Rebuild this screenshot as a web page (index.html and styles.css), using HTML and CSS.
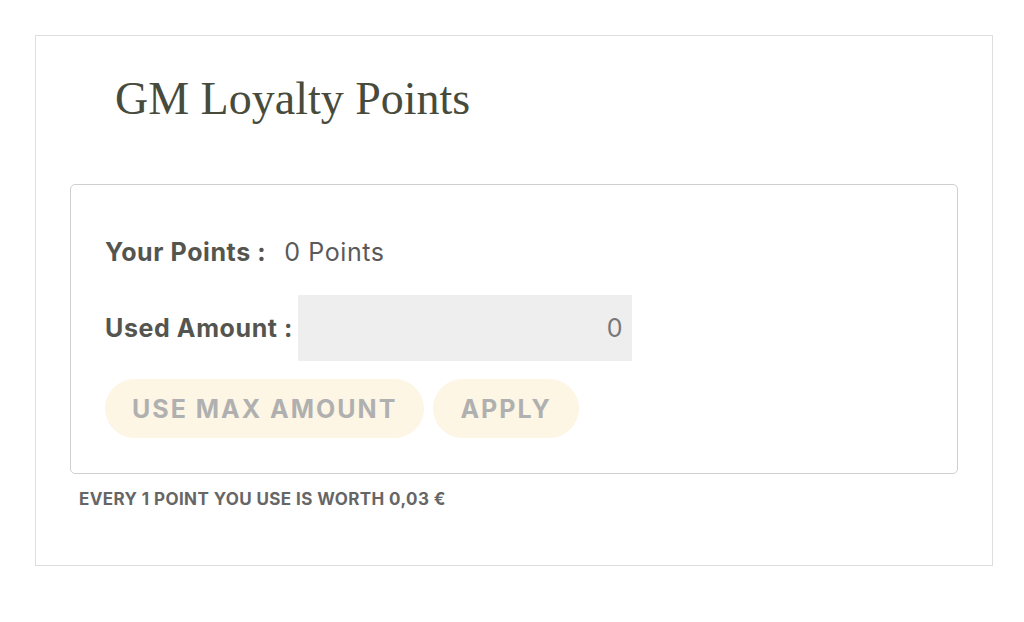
FILE: index.html
```html
<!DOCTYPE html>
<html>
<head>
<meta charset="utf-8">
<link rel="stylesheet" href="styles.css">
</head>
<body>
<div class="panel">
  <h2 class="title">GM Loyalty Points</h2>
  <div class="card">
    <div class="row points-row">
      <span class="label">Your Points :</span>
      <span class="value">0 Points</span>
    </div>
    <div class="row amount-row">
      <span class="label">Used Amount :</span>
      <div class="input">0</div>
    </div>
    <div class="buttons">
      <button class="btn">USE MAX AMOUNT</button>
      <button class="btn">APPLY</button>
    </div>
  </div>
  <p class="note">EVERY 1 POINT YOU USE IS WORTH 0,03 €</p>
</div>
</body>
</html>
```

FILE: styles.css
```css
html, body {
  margin: 0;
  padding: 0;
  background: #fff;
}
body {
  font-family: Inter, "DejaVu Sans", sans-serif;
}
.panel {
  box-sizing: border-box;
  margin: 35px 0 0 35px;
  width: 958px;
  height: 531px;
  border: 1px solid #dedede;
  padding: 0 34px;
}
.title {
  margin: 35px 0 0 45px;
  font-family: "Liberation Serif", "DejaVu Serif", serif;
  font-weight: 400;
  font-size: 46px;
  line-height: 56px;
  color: #484b3b;
}
.card {
  box-sizing: border-box;
  margin-top: 57px;
  height: 290px;
  border: 1px solid #cfcfcf;
  border-radius: 5px;
  padding: 42px 34px 0;
}
.row {
  display: flex;
  align-items: center;
  font-size: 25px;
  letter-spacing: 0.6px;
}
.label {
  font-weight: 700;
  color: #555550;
}
.value {
  margin-left: 18px;
  color: #5a5a5a;
}
.points-row {
  height: 50px;
}
.amount-row {
  margin-top: 18px;
}
.input {
  box-sizing: border-box;
  width: 334px;
  height: 66px;
  margin-left: 5px;
  background: #eeeeee;
  display: flex;
  align-items: center;
  justify-content: flex-end;
  padding-right: 9px;
  color: #777;
  font-size: 25px;
}
.buttons {
  display: flex;
  gap: 9px;
  margin-top: 18px;
}
.btn {
  height: 59px;
  border: none;
  border-radius: 30px;
  background: #fdf6e4;
  color: #b0b0b0;
  font-family: Inter, "DejaVu Sans", sans-serif;
  font-weight: 700;
  font-size: 25px;
  letter-spacing: 2px;
  padding: 0 27px;
}
.note {
  margin: 15px 0 0 9px;
  font-size: 17px;
  font-weight: 700;
  color: #666;
  letter-spacing: 0.4px;
}
```
